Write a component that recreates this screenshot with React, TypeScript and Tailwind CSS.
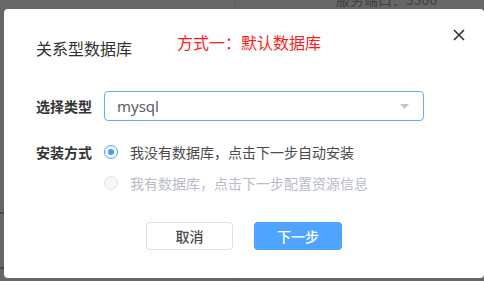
import React from 'react';

const cjk = { fontFamily: '"Noto Sans CJK SC", "Noto Sans", sans-serif' };

function Radio({ checked, disabled, label }: { checked?: boolean; disabled?: boolean; label: string }) {
  return (
    <label className="flex items-center h-5 cursor-pointer">
      <span
        className={
          'w-[14px] h-[14px] rounded-full border flex items-center justify-center ' +
          (checked ? 'border-[#409eff] bg-white' : disabled ? 'border-[#dfe2e8] bg-[#f5f7fa]' : 'border-[#dcdfe6] bg-white')
        }
      >
        {checked && <span className="w-[6px] h-[6px] rounded-full bg-[#409eff]" />}
      </span>
      <span className={'ml-3 text-[14px] leading-5 ' + (disabled ? 'text-[#b8bcc4]' : 'text-[#4a4a4a]')}>{label}</span>
    </label>
  );
}

export default function App() {
  return (
    <div className="relative w-[484px] h-[281px] overflow-hidden bg-[#676767]" style={cjk}>
      {/* dimmed page behind the modal */}
      <div className="absolute left-[336px] top-[-11px] text-[14px] leading-5 text-[#3f3f3f]">服务端口：3306</div>
      <div className="absolute left-[235px] top-0 w-px h-full bg-[#5c5c5c]" />
      <div className="absolute left-0 top-[212px] w-[4px] h-[2px] bg-[#2d4a70]" />
      <div className="absolute left-0 top-[267px] w-[4px] h-[2px] bg-[#2d4a70]" />

      <div className="pt-[9px] pl-[4px]">
        <div className="relative w-[480px] h-[269px] bg-white rounded-[4px] flex flex-col">
          {/* header */}
          <div className="flex items-start pl-8 pr-[19px] pt-[19px]">
            <span className="mt-[8px] text-[16px] leading-6 text-[#303133]">关系型数据库</span>
            <span className="ml-[45px] mt-[2px] text-[16px] leading-6 text-[#ff1a1a]">方式一：默认数据库</span>
            <button className="ml-auto mt-[1px] text-[#303133]">
              <svg width="12" height="12" viewBox="0 0 12 12" fill="none" stroke="currentColor" strokeWidth="1.6">
                <path d="M1 1L11 11M11 1L1 11" />
              </svg>
            </button>
          </div>

          {/* form */}
          <div className="mt-[31px] px-8">
            <div className="flex items-center">
              <span className="w-[68px] text-[14px] font-semibold text-[#333]">选择类型</span>
              <div className="w-[320px] h-[30px] border border-[#5fb0ff] rounded-[4px] flex items-center pl-3 pr-[14px]">
                <span className="text-[15px] text-[#5a5e66]" style={{ fontFamily: '"Noto Sans", "Noto Sans CJK SC", sans-serif' }}>
                  mysql
                </span>
                <svg className="ml-auto" width="9" height="5" viewBox="0 0 9 5">
                  <path d="M0 0H9L4.5 5Z" fill="#c0c4cc" />
                </svg>
              </div>
            </div>

            <div className="flex mt-[21px]">
              <span className="w-[68px] text-[14px] leading-5 font-semibold text-[#333]">安装方式</span>
              <div className="flex flex-col gap-[11px]">
                <Radio checked label="我没有数据库，点击下一步自动安装" />
                <Radio disabled label="我有数据库，点击下一步配置资源信息" />
              </div>
            </div>
          </div>

          {/* footer */}
          <div className="mt-[29px] flex justify-center gap-[21px]">
            <button className="w-[87px] h-[28px] border border-[#dcdfe6] rounded-[4px] bg-white text-[14px] font-medium text-[#4a4a4a]">
              取消
            </button>
            <button className="w-[88px] h-[28px] rounded-[4px] bg-[#4ea4ff] text-[14px] font-medium text-white">
              下一步
            </button>
          </div>
        </div>
      </div>
    </div>
  );
}
